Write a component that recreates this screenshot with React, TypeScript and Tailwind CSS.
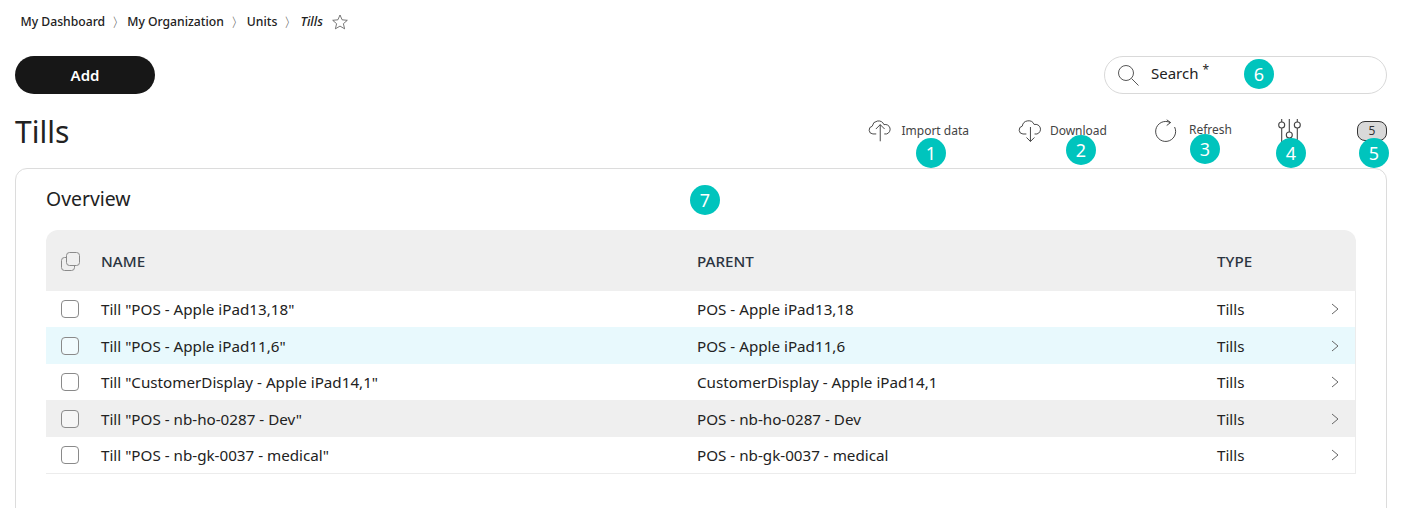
import React from "react";

const rows = [
  { name: 'Till "POS - Apple iPad13,18"', parent: "POS - Apple iPad13,18", bg: "bg-white", h: "h-[36px]" },
  { name: 'Till "POS - Apple iPad11,6"', parent: "POS - Apple iPad11,6", bg: "bg-[#e8f9fd]", h: "h-[37px] pt-[1px]" },
  { name: 'Till "CustomerDisplay - Apple iPad14,1"', parent: "CustomerDisplay - Apple iPad14,1", bg: "bg-white", h: "h-[36px]" },
  { name: 'Till "POS - nb-ho-0287 - Dev"', parent: "POS - nb-ho-0287 - Dev", bg: "bg-[#efefef]", h: "h-[37px] pt-[1px]" },
  { name: 'Till "POS - nb-gk-0037 - medical"', parent: "POS - nb-gk-0037 - medical", bg: "bg-white", h: "h-[36px]" },
];

function Dot({ n, className }: { n: number; className: string }) {
  return (
    <span className={`absolute flex h-[30px] w-[30px] items-center justify-center rounded-full bg-[#00c4bd] text-[18px] leading-none text-white ${className}`}>
      {n}
    </span>
  );
}

const Cloud = ({ down }: { down?: boolean }) => (
  <svg width="25" height="25" viewBox="0 0 25 25" fill="none" stroke="#333" strokeWidth="0.9">
    <path d="M8 15H5a4 4 0 0 1-.7-7.9A6.3 6.3 0 0 1 16.3 5.5a4.8 4.8 0 0 1 2.7 9.5H17" strokeLinecap="round" />
    {down ? <path d="M12.5 8v14.5M8.5 18.5l4 4 4-4" /> : <path d="M12.5 22.5V5.5M8 10l4.5-4.5 4.5 4.5" />}
  </svg>
);

const Sep = ({ className }: { className: string }) => (
  <span className={`pl-[7px] text-[13px] font-normal leading-none text-[#333] ${className}`}>〉</span>
);

export default function App() {
  return (
    <div className="relative h-[508px] w-[1402px] overflow-hidden bg-white font-['Noto_Sans',sans-serif] text-[#1e1e1e]">
      <nav className="flex h-[44px] items-center pl-[20.5px] text-[12.2px] font-medium text-[#222]">
        <span>My Dashboard</span>
        <Sep className="w-[22px]" />
        <span>My Organization</span>
        <Sep className="w-[23px]" />
        <span>Units</span>
        <Sep className="w-[23px]" />
        <span className="text-[12.8px] italic">Tills</span>
        <svg className="ml-[9px]" width="16" height="16" viewBox="0 0 16 16" fill="none" stroke="#555" strokeWidth="0.8">
          <path d="M8 1l2.1 4.8 5.2.5-3.9 3.4 1.2 5.1L8 12.1l-4.6 2.7 1.2-5.1L.7 6.3l5.2-.5z" />
        </svg>
      </nav>

      <div className="mt-[12px] flex items-center justify-between pl-[15px] pr-[15px]">
        <button className="h-[38px] w-[140px] rounded-full bg-[#171717] text-[15px] font-semibold text-white">Add</button>
        <div className="relative flex h-[38px] w-[283px] items-center rounded-full border border-[#d9d9d9] pl-[12px]">
          <svg className="-translate-x-[1px]" width="24" height="24" viewBox="0 0 24 24" fill="none" stroke="#444" strokeWidth="0.9">
            <circle cx="10" cy="10" r="7.5" />
            <path d="M15.5 15.5l7 7" />
          </svg>
          <span className="ml-[10px] -translate-y-[2px] text-[15px] font-normal text-[#222]">Search</span>
          <span className="ml-[4px] -translate-y-[5px] text-[12px]">*</span>
          <Dot n={6} className="left-[139px] top-[2px]" />
        </div>
      </div>

      <div className="flex h-[74px] items-center pl-[15px]">
        <h1 className="w-[853px] translate-y-[1px] text-[30px] font-normal leading-none text-[#222]">Tills</h1>
        <div className="relative flex w-[101px] items-center">
          <Cloud />
          <span className="ml-[9px] whitespace-nowrap text-[12px] text-[#444]">Import data</span>
          <Dot n={1} className="left-[48px] top-[19px]" />
        </div>
        <div className="relative ml-[49px] flex w-[89px] items-center">
          <Cloud down />
          <span className="ml-[7px] text-[12px] text-[#444]">Download</span>
          <Dot n={2} className="left-[48px] top-[16px]" />
        </div>
        <div className="relative ml-[48px] flex w-[77px] items-center">
          <svg width="24" height="25" viewBox="0 0 24 25" fill="none" stroke="#333" strokeWidth="0.9">
            <path d="M15.3 3.6A10 10 0 1 0 19.6 8" />
            <path d="M11.7 0.8l3.9 2.7-3.9 3" />
          </svg>
          <span className="ml-[10px] -translate-y-[1px] text-[12px] text-[#444]">Refresh</span>
          <Dot n={3} className="left-[35px] top-[15px]" />
        </div>
        <div className="relative ml-[46px]">
          <svg className="block" width="24" height="24" viewBox="0 0 24 24" fill="none" stroke="#444" strokeWidth="1.1">
            <path d="M3.7 0v3M3.7 9v14M11.3 0v13M11.3 19v4M19.3 0v3M19.3 9v14" />
            <circle cx="3.7" cy="6" r="3" />
            <circle cx="11.3" cy="16" r="3" />
            <circle cx="19.3" cy="6" r="3" />
          </svg>
          <Dot n={4} className="left-[-2px] top-[19px]" />
        </div>
        <div className="relative ml-[55px]">
          <span className="flex h-[20px] w-[30px] items-center justify-center rounded-[8px] border border-[#333] bg-[#d9d9d9] text-[12px] text-[#333]">5</span>
          <Dot n={5} className="left-[2px] top-[17px]" />
        </div>
      </div>

      <section className="relative ml-[15px] h-[360px] w-[1372px] rounded-[12px] border border-[#dcdcdc] pl-[30px] pt-[16px]">
        <h2 className="text-[19.4px] font-normal leading-[28px] text-[#222]">Overview</h2>
        <Dot n={7} className="left-[674px] top-[16px]" />
        <div className="mt-[17px] w-[1310px] overflow-hidden rounded-t-[12px] border-b border-[#ececec] text-[15.2px]">
          <div className="grid h-[61px] grid-cols-[55px_596px_520px_139px] items-center bg-[#efefef] pt-[1px] font-medium text-[#2b3440]">
            <span className="pl-[15px]">
              <svg className="block" width="19" height="19" viewBox="0 0 19 19" fill="none" stroke="#8a8a8a" strokeWidth="1">
                <rect x="5.5" y="0.5" width="13" height="13" rx="3" />
                <path d="M5 5.5H3.5a3 3 0 0 0-3 3v7a3 3 0 0 0 3 3h7a3 3 0 0 0 3-3V14" />
              </svg>
            </span>
            <span>NAME</span>
            <span>PARENT</span>
            <span>TYPE</span>
          </div>
          {rows.map((r) => (
            <div key={r.name} className={`grid grid-cols-[55px_596px_520px_139px] items-center border-r border-[#ececec] text-[#222] ${r.bg} ${r.h}`}>
              <span className="pl-[15px]">
                <span className="block h-[18px] w-[18px] rounded-[4px] border border-[#8a8a8a] bg-white/40" />
              </span>
              <span>{r.name}</span>
              <span>{r.parent}</span>
              <span className="flex items-center justify-between pr-[17px]">
                Tills
                <svg width="8" height="12" viewBox="0 0 8 12" fill="none" stroke="#666" strokeWidth="1">
                  <path d="M1 1l6 5-6 5" />
                </svg>
              </span>
            </div>
          ))}
        </div>
      </section>
    </div>
  );
}
